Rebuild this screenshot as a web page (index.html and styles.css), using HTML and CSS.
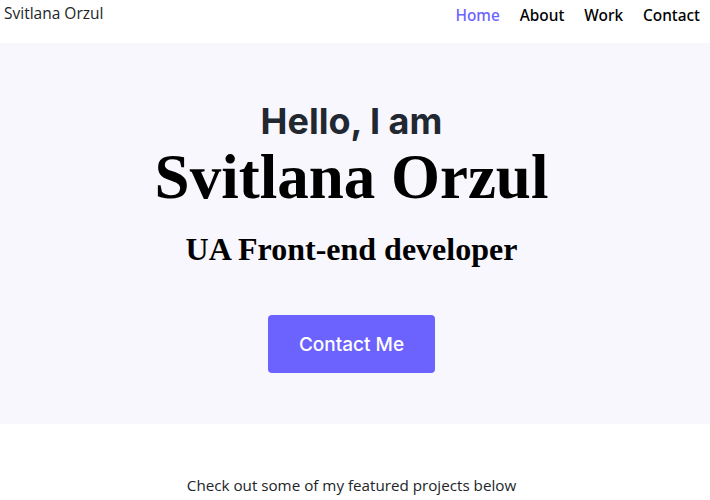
FILE: index.html
```html
<!DOCTYPE html>
<html lang="en">
<head>
<meta charset="utf-8">
<title>Svitlana Orzul</title>
<link rel="stylesheet" href="styles.css">
</head>
<body>
<header class="header">
  <a class="brand" href="#">Svitlana Orzul</a>
  <nav class="nav">
    <a class="nav-link active" href="#">Home</a>
    <a class="nav-link" href="#">About</a>
    <a class="nav-link" href="#">Work</a>
    <a class="nav-link" href="#">Contact</a>
  </nav>
</header>
<section class="hero">
  <h2 class="hello">Hello, I am</h2>
  <h1 class="name">Svitlana Orzul</h1>
  <h3 class="role">UA Front-end developer</h3>
  <a class="btn" href="#">Contact Me</a>
</section>
<section class="projects">
  <p class="intro">Check out some of my featured projects below</p>
</section>
</body>
</html>
```
FILE: styles.css
```css
* { box-sizing: border-box; }
body {
  margin: 0;
  font-family: "Open Sans", "Noto Sans", sans-serif;
  color: #212529;
  background: #fff;
}
a { text-decoration: none; }
.header {
  height: 43px;
  display: flex;
  justify-content: space-between;
  align-items: flex-start;
  padding: 0 10px 0 4px;
}
.brand {
  font-size: 15.5px;
  line-height: 1;
  color: #212529;
  margin-top: 6px;
}
.nav {
  display: flex;
  gap: 20px;
  margin-top: 8px;
}
.nav-link {
  font-family: "Noto Sans", sans-serif;
  font-size: 15.4px;
  font-weight: 500;
  color: #000;
  line-height: 1;
}
.nav-link.active { color: #6c63ff; }
.hero {
  background: #f8f7fd;
  height: 381px;
  display: flex;
  flex-direction: column;
  align-items: center;
  padding: 57px 7px 0 0;
}
.hello {
  margin: 0;
  font-family: "Inter", sans-serif;
  font-weight: 700;
  font-size: 36px;
  line-height: 42px;
  color: #222831;
}
.name {
  margin: 0;
  font-family: "Liberation Serif", serif;
  font-weight: 700;
  font-size: 63px;
  line-height: 70px;
  color: #000;
}
.role {
  margin: 17px 0 0;
  font-family: "Liberation Serif", serif;
  font-weight: 700;
  font-size: 32px;
  line-height: 40px;
  color: #000;
}
.btn {
  margin-top: 46px;
  width: 167px;
  height: 58px;
  display: flex;
  align-items: center;
  justify-content: center;
  background: #6c63ff;
  color: #fff;
  border-radius: 4px;
  font-family: "Inter", sans-serif;
  font-weight: 500;
  font-size: 19px;
}
.projects {
  display: flex;
  justify-content: center;
  padding: 51px 7px 0 0;
}
.intro {
  margin: 0;
  font-size: 15.2px;
  line-height: 20px;
}
```
